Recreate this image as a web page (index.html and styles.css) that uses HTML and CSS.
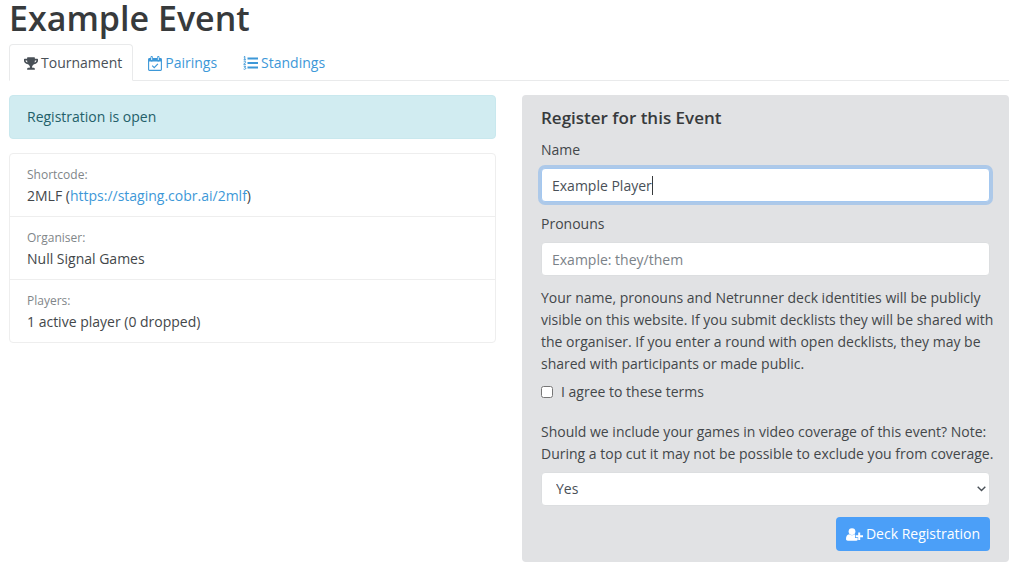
FILE: index.html
```html
<!DOCTYPE html>
<html lang="en">
<head>
    <meta charset="utf-8">
    <title>Example Event</title>
    <link rel="stylesheet" href="styles.css">
</head>
<body>
    <div class="container">
        <h1>Example Event</h1>
        <nav class="tabs">
            <a class="tab active" href="#tournament">
                <svg class="icon" width="14" height="13" viewBox="0 0 576 512" fill="currentColor">
                    <path d="M552 64H448V24c0-13.3-10.7-24-24-24H152c-13.3 0-24 10.7-24 24v40H24C10.7 64 0 74.7 0 88v56c0 35.7 22.5 72.4 61.9 100.7 31.5 22.7 69.8 37.1 110 41.7C203.3 338.5 240 360 240 360v72h-48c-35.3 0-64 20.7-64 56v12c0 6.6 5.4 12 12 12h296c6.6 0 12-5.4 12-12v-12c0-35.3-28.7-56-64-56h-48v-72s36.7-21.5 68.1-73.6c40.3-4.6 78.6-19 110-41.7 39.3-28.3 61.9-65 61.9-100.7V88c0-13.3-10.7-24-24-24zM99.3 192.8C74.9 175.2 64 155.6 64 144v-16h64.2c1 32.6 5.8 61.2 12.8 86.2-15.1-5.2-29.2-12.4-41.7-21.4zM512 144c0 16.1-17.7 36.1-35.3 48.8-12.5 9-26.7 16.2-41.8 21.4 7-25 11.8-53.6 12.8-86.2H512v16z"/>
                </svg>
                Tournament
            </a>
            <a class="tab" href="#pairings">
                <svg class="icon" width="14" height="15" viewBox="0 0 14 15" fill="none" stroke="currentColor">
                    <rect x="0.6" y="2.6" width="12.8" height="11.8" rx="0.8" stroke-width="1.1"/>
                    <path d="M0.6 3h12.8v2.5H0.6z" fill="currentColor" stroke="none"/>
                    <path d="M3.7 1.2v3M10.3 1.2v3" stroke-width="2.4" stroke-linecap="round"/>
                    <path d="M3.7 1.2v2.8M10.3 1.2v2.8" stroke="#fff" stroke-width="0.9"/>
                    <path d="M4.2 9.6l2 2 3.7-3.8" stroke-width="1.2"/>
                </svg>
                Pairings
            </a>
            <a class="tab" href="#standings">
                <svg class="icon" width="15" height="14" viewBox="0 0 15 14" fill="none" stroke="currentColor">
                    <path d="M4.500 2.500H15M4.500 7H15M4.500 11.500H15" stroke-width="1.9"/>
                    <path d="M.8 1l1-.6v3.2M.6 3.800h2.400M.7 5.700c.5-.8 2-.6 1.900.4 0 .8-1.600 1.200-1.900 2.200h2.200M.7 10.200h1.900l-1 1.200c1.700 0 1.500 2-.1 1.900l-.9-.3" stroke-width="1"/>
                </svg>
                Standings
            </a>
        </nav>

        <div class="row">
            <div class="col">
                <div class="alert">Registration is open</div>
                <ul class="list-group">
                    <li>
                        <small>Shortcode:</small>
                        <div>2MLF (<a href="https://staging.cobr.ai/2mlf">https://staging.cobr.ai/2mlf</a>)</div>
                    </li>
                    <li>
                        <small>Organiser:</small>
                        <div>Null Signal Games</div>
                    </li>
                    <li>
                        <small>Players:</small>
                        <div>1 active player (0 dropped)</div>
                    </li>
                </ul>
            </div>

            <div class="col">
                <form class="card">
                    <h2>Register for this Event</h2>
                    <div class="form-group">
                        <label for="name">Name</label>
                        <div class="input-wrapper">
                            <input class="form-control" type="text" id="name" value="Example Player" autofocus>
                            <span class="caret"><span class="caret-text"></span></span>
                        </div>
                    </div>
                    <div class="form-group">
                        <label for="pronouns">Pronouns</label>
                        <input class="form-control" type="text" id="pronouns" placeholder="Example: they/them">
                    </div>
                    <p class="wide-text">Your name, pronouns and Netrunner deck identities will be publicly visible on this website. If you submit decklists they will be shared with the organiser. If you enter a round with open decklists, they may be shared with participants or made public.</p>
                    <div class="form-check">
                        <input type="checkbox" id="consent">
                        <label for="consent">I agree to these terms</label>
                    </div>
                    <div class="form-group">
                        <label class="wide-text" for="coverage">Should we include your games in video coverage of this event? Note: During a top cut it may not be possible to exclude you from coverage.</label>
                        <div class="input-wrapper">
                            <select class="form-control" id="coverage">
                                <option>Yes</option>
                                <option>No</option>
                            </select>
                            <svg class="chevron" width="9" height="6" viewBox="0 0 9 6" fill="none" stroke="currentColor" stroke-width="1.4">
                                <path d="M0.7 0.8l3.8 3.8 3.8-3.8"/>
                            </svg>
                        </div>
                    </div>
                    <div class="actions">
                        <button class="btn" type="submit">
                            <svg class="icon" width="17" height="13" viewBox="0 0 17 13" fill="currentColor">
                                <circle cx="6" cy="3.6" r="3.4"/>
                                <path d="M3.200 6.300C1 6.500 0 8.500 0 11c0 1.100.7 1.700 1.800 1.700h8.400c.7 0 1.200-.2 1.500-.7V10H9V7.200l.2-.7-.4-.2C7.200 7.600 4.800 7.600 3.200 6.300z"/>
                                <path d="M12.200 4.500h2v2.700H17v2h-2.800V12h-2V9.200H9.700v-2h2.500z"/>
                            </svg>
                            Deck Registration
                        </button>
                    </div>
                </form>
            </div>
        </div>
    </div>

    <script src="script.js"></script>
</body>
</html>
```
FILE: styles.css
```css
* {
    box-sizing: border-box;
}
body {
    margin: 0;
    font-family: "Segoe UI", "Open Sans", "Noto Sans", sans-serif;
    font-size: 14px;
    line-height: 22px;
    color: #43474a;
    background-color: #fff;
}
a {
    color: #3d98d8;
    text-decoration: none;
}
.container {
    padding: 0 15px 12px 9px;
}
h1 {
    margin: 0 0 8px;
    font-size: 34px;
    font-weight: 600;
    line-height: 36px;
    color: #373a3c;
}
.tabs {
    display: flex;
    margin-bottom: 14px;
    border-bottom: 1px solid #e9eaeb;
}
.tab {
    display: flex;
    align-items: center;
    gap: 3px;
    margin-bottom: -1px;
    padding: 7px 10px 6px 14px;
    border: 1px solid transparent;
    border-radius: 4px 4px 0 0;
}
.tab.active {
    color: #495057;
    background-color: #fff;
    border-color: #e9eaeb #e9eaeb #fff;
}
.icon {
    flex-shrink: 0;
}
.row {
    display: grid;
    grid-template-columns: 1fr 1fr;
    gap: 26px;
}
.alert {
    margin-bottom: 14px;
    padding: 10px 17px;
    color: #236069;
    background-color: #d1ecf1;
    border: 1px solid #c9e8ee;
    border-radius: 4px;
}
.list-group {
    margin: 0;
    padding: 0;
    list-style: none;
    border: 1px solid #eee;
    border-radius: 4px;
}
.list-group li {
    padding: 10px 17px;
    line-height: 21px;
}
.list-group li + li {
    border-top: 1px solid #eee;
}
small {
    display: block;
    font-size: 12px;
    color: #818689;
}
.card {
    padding: 12px 19px 11px;
    background-color: #e1e2e4;
    border-radius: 4px;
}
h2 {
    margin: 0 0 10px;
    font-size: 17px;
    font-weight: 600;
    line-height: 22px;
    color: #373a3c;
}
.form-group {
    margin-bottom: 11px;
}
.form-group label {
    display: block;
    margin-bottom: 7px;
}
.input-wrapper {
    position: relative;
}
.form-control {
    display: block;
    width: 100%;
    height: 34px;
    padding: 0 10px;
    font: inherit;
    color: #495057;
    background-color: #fff;
    border: 1px solid #dcdee0;
    border-radius: 4px;
    outline: none;
}
.form-control::placeholder {
    color: #7b8288;
    opacity: 1;
}
.form-control:focus {
    border-color: #a4c8f0;
    box-shadow: 0 0 0 3px #adc9e9;
    caret-color: transparent;
}
/* Caret, placed after a hidden copy of the typed text */
.caret {
    position: absolute;
    top: 8px;
    left: 11px;
    height: 19px;
    line-height: 19px;
    border-right: 1px solid #373a3c;
    pointer-events: none;
}
.caret-text {
    visibility: hidden;
    white-space: pre;
}
.form-control:not(:focus) + .caret {
    display: none;
}
.card .wide-text {
    margin-right: -12px;
}
.card p {
    margin: 0 0 6px;
}
.form-check {
    display: flex;
    align-items: center;
    gap: 8px;
    margin-bottom: 18px;
}
.form-check input {
    width: 12px;
    height: 12px;
    margin: 0;
}
select.form-control {
    padding: 0 14px;
    appearance: none;
}
.chevron {
    position: absolute;
    top: 14px;
    right: 4px;
    color: #495057;
    pointer-events: none;
}
.actions {
    display: flex;
    justify-content: flex-end;
}
.btn {
    display: flex;
    align-items: center;
    gap: 3px;
    height: 34px;
    padding: 0 10px;
    font: inherit;
    color: #fff;
    background-color: #4b9ff8;
    border: 0;
    border-radius: 4px;
    cursor: pointer;
}
```
FILE: script.js
```js
const nameInput = document.getElementById("name");
const caretText = document.querySelector(".caret-text");

// Keep the caret at the text up to the cursor
function moveCaret() {
    caretText.textContent = nameInput.value.slice(0, nameInput.selectionEnd);
}

nameInput.addEventListener("input", moveCaret);
nameInput.addEventListener("keyup", moveCaret);
nameInput.addEventListener("click", moveCaret);

nameInput.focus();
nameInput.setSelectionRange(nameInput.value.length, nameInput.value.length);
moveCaret();
```
